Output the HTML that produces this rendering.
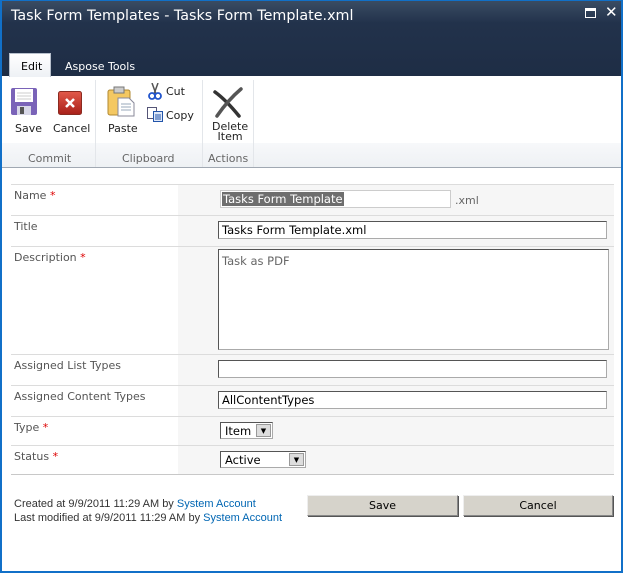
<!DOCTYPE html>
<html><head><meta charset="utf-8"><style>
*{margin:0;padding:0;box-sizing:border-box}
body{width:623px;height:573px;overflow:hidden;background:#fff;font-family:"DejaVu Sans","Liberation Sans",sans-serif;font-size:11px;color:#444;position:relative}
.abs{position:absolute}
#frame{left:0;top:0;width:623px;height:573px;border:2px solid #1170c8;border-top:1px solid #1170c8}
#title{left:2px;top:1px;width:619px;height:75px;background:linear-gradient(#3a4c63 0,#22324b 22px,#1e2d45 100%)}
.t{font-size:14.3px;color:#fff;left:9px;top:7px;font-family:"DejaVu Sans",sans-serif}
.tab{font-size:11px}
.sep{width:1px;background:#e3e6ea;top:80px;height:87px}
.lbl{font-size:11px;color:#555}
.row{left:11px;width:603px;border-top:1px solid #dcdcdc}
.inp{background:#fff;border:1px solid #aaa;border-top-color:#555;border-left-color:#555;font-size:11.5px;color:#000;padding:1px 3px;line-height:14px}
.req{color:#d00}
.btn{background:#d6d3cb;border:1px solid #888;border-top-color:#eee;border-left-color:#eee;text-align:center;font-size:11px;color:#000;line-height:19px;box-shadow:1px 1px 0 #555}
a{color:#0066b3;text-decoration:none}
</style></head><body>
<div class="abs" id="title">
<div class="abs t">Task Form Templates - Tasks Form Template.xml</div>
<div class="abs" style="left:583px;top:7px;width:11px;height:10px;border:1px solid #fff;border-top-width:3px"></div>
<div class="abs" style="left:603px;top:2px;color:#fff;font-size:15px;font-weight:bold">✕</div>
<div class="abs" style="left:7px;top:52px;width:42px;height:24px;background:linear-gradient(#fff,#eef1f5);border:1px solid #b7c0cc;border-bottom:none"></div>
<div class="abs tab" style="left:19px;top:59px;color:#000">Edit</div>
<div class="abs tab" style="left:63px;top:59px;color:#fff">Aspose Tools</div>
</div>
<div class="abs" style="left:2px;top:143px;width:619px;height:24px;background:linear-gradient(#f7f8fa,#eef1f4)"></div>
<div class="abs" style="left:2px;top:167px;width:619px;height:1px;background:#a0a8b2"></div>
<div class="abs sep" style="left:95px"></div>
<div class="abs sep" style="left:202px"></div>
<div class="abs sep" style="left:253px"></div>
<div class="abs lbl" style="left:28px;top:152px;color:#666">Commit</div>
<div class="abs lbl" style="left:122px;top:152px;color:#666">Clipboard</div>
<div class="abs lbl" style="left:208px;top:152px;color:#666">Actions</div>
<svg class="abs" style="left:11px;top:88px" width="27" height="28"><rect x="0" y="0" width="26" height="27" rx="2" fill="#7a63b8"/><rect x="4" y="1" width="18" height="13" fill="#fff"/><line x1="6" y1="5" x2="20" y2="5" stroke="#ccc"/><line x1="6" y1="8" x2="20" y2="8" stroke="#ccc"/><line x1="6" y1="11" x2="20" y2="11" stroke="#ccc"/><rect x="6" y="18" width="14" height="9" fill="#d8d8e8"/><rect x="9" y="19" width="4" height="7" fill="#555"/></svg>
<div class="abs lbl" style="left:15px;top:122px;color:#222">Save</div>
<svg class="abs" style="left:58px;top:91px" width="24" height="24"><defs><linearGradient id="r" x1="0" y1="0" x2="0" y2="1"><stop offset="0" stop-color="#e25a4a"/><stop offset="1" stop-color="#a8201a"/></linearGradient></defs><rect x="0.5" y="0.5" width="23" height="23" rx="2" fill="url(#r)" stroke="#8a2a20"/><path d="M8 8L16 16M16 8L8 16" stroke="#fff" stroke-width="2.5"/></svg>
<div class="abs lbl" style="left:53px;top:122px;color:#222">Cancel</div>
<svg class="abs" style="left:107px;top:86px" width="28" height="31"><rect x="1" y="4" width="22" height="25" rx="2" fill="#f4c862" stroke="#b08830"/><rect x="7" y="1" width="10" height="6" fill="#ccc" stroke="#777"/><path d="M11 12h11l5 5v13H11z" fill="#fff" stroke="#889"/><path d="M14 18h10M14 21h10M14 24h10" stroke="#9ab"/></svg>
<div class="abs lbl" style="left:108px;top:122px;color:#222">Paste</div>
<svg class="abs" style="left:148px;top:83px" width="14" height="17"><path d="M4 0L8 11M10 0L6 11" stroke="#555" stroke-width="1.5"/><circle cx="4" cy="13" r="3" fill="none" stroke="#2255cc" stroke-width="1.8"/><circle cx="10" cy="13" r="3" fill="none" stroke="#2255cc" stroke-width="1.8"/></svg>
<div class="abs lbl" style="left:166px;top:85px;color:#222">Cut</div>
<svg class="abs" style="left:147px;top:107px" width="16" height="15"><rect x="0.5" y="0.5" width="9" height="11" fill="#fff" stroke="#557"/><rect x="6.5" y="4.5" width="9" height="10" fill="#dfe8f8" stroke="#2255aa"/><path d="M8 8h6M8 10h6M8 12h6" stroke="#2255aa"/></svg>
<div class="abs lbl" style="left:166px;top:109px;color:#222">Copy</div>
<svg class="abs" style="left:212px;top:86px" width="32" height="32"><path d="M3 6Q14 14 27 30" stroke="#333" stroke-width="3.5" fill="none" stroke-linecap="round"/><path d="M29 3Q16 14 5 30" stroke="#555" stroke-width="3.5" fill="none" stroke-linecap="round"/></svg>
<div class="abs lbl" style="left:212px;top:122px;color:#222;line-height:10px;text-align:center">Delete<br>Item</div>
<div class="abs" style="left:178px;top:185px;width:436px;height:289px;background:#f6f6f6"></div>
<div class="abs row" style="top:184px"></div>
<div class="abs row" style="top:215px"></div>
<div class="abs row" style="top:246px"></div>
<div class="abs row" style="top:354px"></div>
<div class="abs row" style="top:385px"></div>
<div class="abs row" style="top:416px"></div>
<div class="abs row" style="top:445px"></div>
<div class="abs row" style="top:474px;border-top-color:#c8c8c8"></div>
<div class="abs lbl" style="left:14px;top:189px">Name <span class="req">*</span></div>
<div class="abs lbl" style="left:14px;top:220px">Title</div>
<div class="abs lbl" style="left:14px;top:251px">Description <span class="req">*</span></div>
<div class="abs lbl" style="left:14px;top:359px">Assigned List Types</div>
<div class="abs lbl" style="left:14px;top:390px">Assigned Content Types</div>
<div class="abs lbl" style="left:14px;top:421px">Type <span class="req">*</span></div>
<div class="abs lbl" style="left:14px;top:450px">Status <span class="req">*</span></div>
<div class="abs inp" style="left:220px;top:190px;width:231px;height:18px;border-color:#ccc;padding:1px 1px"><span style="background:#6e6e6e;color:#fff;padding:0 1px">Tasks Form Template</span></div>
<div class="abs lbl" style="left:455px;top:194px;color:#666">.xml</div>
<div class="abs inp" style="left:218px;top:221px;width:389px;height:18px">Tasks Form Template.xml</div>
<div class="abs inp" style="left:218px;top:249px;width:391px;height:101px;color:#666;padding-top:4px">Task as PDF</div>
<div class="abs inp" style="left:218px;top:360px;width:389px;height:18px"></div>
<div class="abs inp" style="left:218px;top:391px;width:389px;height:18px">AllContentTypes</div>
<div class="abs inp" style="left:220px;top:422px;width:53px;height:17px;padding:1px 4px">Item</div>
<div class="abs" style="left:256px;top:424px;width:15px;height:13px;background:#ddd;border:1px solid #999;font-size:7px;text-align:center;line-height:12px;color:#000">▼</div>
<div class="abs inp" style="left:220px;top:451px;width:86px;height:17px;padding:1px 4px">Active</div>
<div class="abs" style="left:289px;top:453px;width:15px;height:13px;background:#ddd;border:1px solid #999;font-size:7px;text-align:center;line-height:12px;color:#000">▼</div>
<div class="abs" style="left:14px;top:497px;color:#333;line-height:14px;font-family:'Liberation Sans',sans-serif;font-size:11px">Created at 9/9/2011 11:29 AM by <a>System Account</a><br>Last modified at 9/9/2011 11:29 AM by <a>System Account</a></div>
<div class="abs btn" style="left:307px;top:495px;width:151px;height:21px">Save</div>
<div class="abs btn" style="left:463px;top:495px;width:150px;height:21px">Cancel</div>
<div class="abs" id="frame"></div>
</body></html>
